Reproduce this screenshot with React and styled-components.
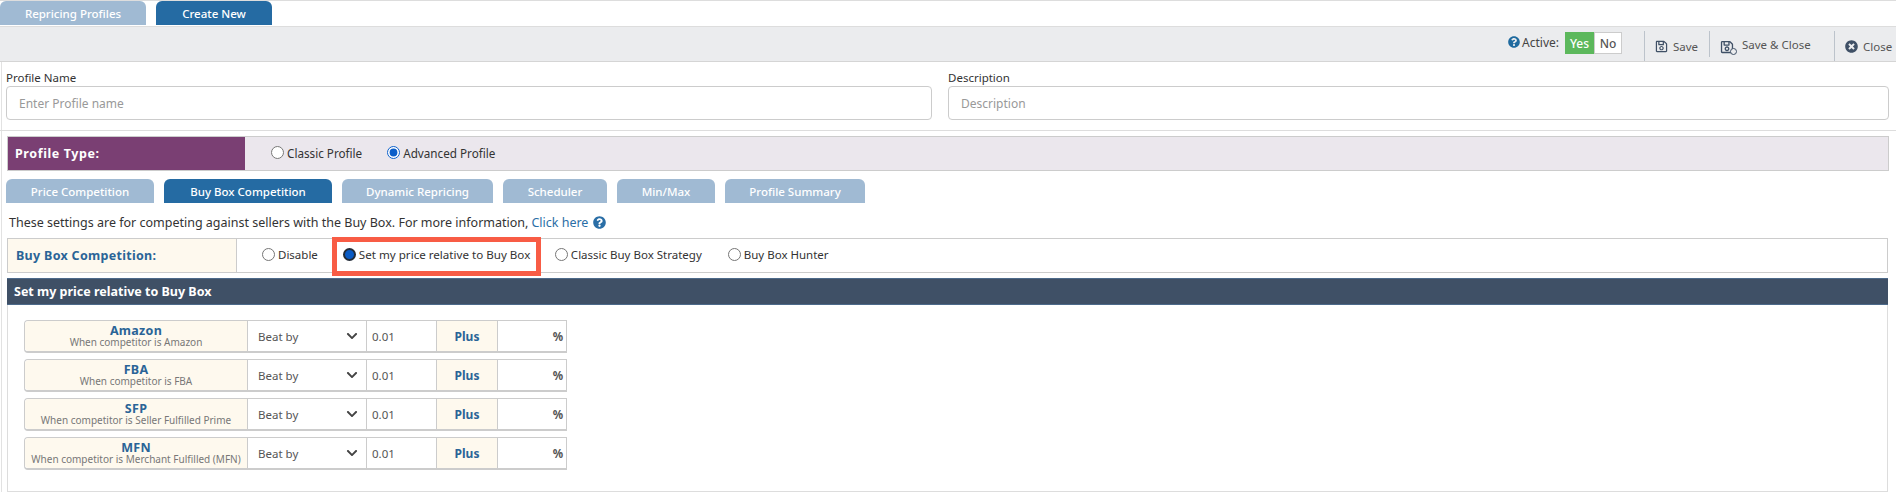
import React from "react";
import styled, { createGlobalStyle } from "styled-components";
import { FaChevronDown, FaQuestionCircle, FaRegSave, FaTimesCircle } from "react-icons/fa";

const GlobalStyle = createGlobalStyle`
  html, body {
    margin: 0;
    padding: 0;
    background: #fff;
  }
  body {
    font-family: "Noto Sans", "Open Sans", sans-serif;
    font-size: 12px;
    color: #333;
  }
  * {
    box-sizing: border-box;
  }
`;

const Page = styled.div`
  width: 1896px;
  height: 496px;
  overflow: hidden;
  border-top: 1px solid #ddd;
`;

const TopTabs = styled.div`
  display: flex;
  gap: 10px;
  height: 25px;
  border-bottom: 1px solid #ddd;
  box-sizing: content-box;
`;

const Tab = styled.div`
  display: flex;
  align-items: center;
  justify-content: center;
  width: ${(p) => p.$w}px;
  height: ${(p) => p.$h || 24}px;
  border-radius: 6px 6px 0 0;
  background: ${(p) => (p.$active ? "#256ba3" : "#a0bad3")};
  color: #fff;
  font-size: 11.5px;
  font-weight: 500;
`;

const Body = styled.div`
  border-left: 1px solid #e2e2e2;
  margin-left: 1px;
`;

const Toolbar = styled.div`
  display: flex;
  align-items: flex-start;
  justify-content: flex-end;
  height: 35px;
  margin-left: -2px;
  background: #ebecee;
  border-bottom: 1px solid #d5d5d5;
`;

const ActiveGroup = styled.div`
  display: flex;
  align-items: center;
  height: 22px;
  margin-top: 5px;
  margin-right: 22px;
  font-size: 12px;
  color: #444;
  svg {
    width: 12px;
    height: 12px;
    color: #1f6a9f;
    margin-right: 2px;
    margin-top: -3px;
  }
`;

const ActiveLabel = styled.span`
  margin-right: 6px;
  margin-top: -1px;
`;

const Toggle = styled.div`
  display: flex;
  align-items: center;
  justify-content: center;
  height: 22px;
  width: ${(p) => p.$w}px;
  font-weight: 500;
  color: ${(p) => (p.$on ? "#fff" : "#555")};
  background: ${(p) => (p.$on ? "#5cb85c" : "#fff")};
  border: 1px solid ${(p) => (p.$on ? "#5cb85c" : "#ccc")};
`;

const ToolButton = styled.div`
  display: flex;
  align-items: flex-start;
  width: ${(p) => p.$w}px;
  height: ${(p) => p.$h}px;
  margin-top: 4px;
  padding-left: 10px;
  padding-top: ${(p) => p.$top}px;
  border-left: 1px solid #bcc3cb;
  font-size: 11.5px;
  color: #555;
  svg {
    width: 13px;
    height: 13px;
    color: #3f5066;
    margin-right: 5px;
    flex: none;
  }
`;

const ButtonText = styled.span`
  margin-top: ${(p) => p.$top || 0}px;
  line-height: 14px;
`;

const SaveCloseIcon = styled.span`
  position: relative;
  display: block;
  width: 17px;
  height: 15px;
  margin-right: 5px;
  flex: none;
  svg {
    width: 14px;
    height: 14px;
  }
  &::after {
    content: "";
    position: absolute;
    right: 0;
    bottom: 0;
    width: 5px;
    height: 5px;
    border-radius: 50%;
    background: #ebecee;
    border: 1.5px solid #3f5066;
  }
`;

const FormRow = styled.div`
  display: flex;
  gap: 16px;
  padding: 9px 6px 10px 6px;
  height: 69px;
  border-bottom: 1px solid #ddd;
  margin-left: -2px;
`;

const Field = styled.div`
  width: ${(p) => p.$w}px;
  flex: none;
`;

const FieldLabel = styled.label`
  display: block;
  height: 14px;
  margin-bottom: 1px;
  line-height: 14px;
  font-size: 11.5px;
  color: #333;
`;

const TextInput = styled.input`
  display: block;
  width: 100%;
  height: 34px;
  padding: 0 12px;
  border: 1px solid #ccc;
  border-radius: 4px;
  background: #fff;
  font: inherit;
  font-size: 12px;
  &::placeholder {
    color: #999;
    opacity: 1;
  }
`;

const Main = styled.div`
  padding: 5px 8px 0 5px;
`;

const ProfileType = styled.div`
  display: flex;
  align-items: stretch;
  height: 35px;
  margin-right: -1px;
  border: 1px solid #ccc;
  background: #ebe7ed;
`;

const ProfileLabel = styled.div`
  display: flex;
  align-items: center;
  width: 237px;
  padding-left: 7px;
  background: #7a3f73;
  color: #fff;
  font-size: 12.5px;
  font-weight: 700;
  letter-spacing: 0.6px;
`;

const RadioGroup = styled.div`
  display: flex;
  align-items: center;
  padding-left: ${(p) => p.$left}px;
  padding-bottom: ${(p) => p.$bottom || 0}px;
`;

const RadioItem = styled.label`
  display: flex;
  align-items: center;
  margin-right: ${(p) => p.$gap}px;
  font-size: ${(p) => p.$size || 11.5}px;
  white-space: nowrap;
  color: #333;
`;

const Radio = styled.input.attrs({ type: "radio" })`
  width: 13px;
  height: 13px;
  margin: 0 3px 0 0;
  accent-color: #0b5ec9;
`;

// the picked radio has keyboard focus in the picture, so it gets a dark ring
const FocusRadio = styled.span`
  display: block;
  width: 13px;
  height: 13px;
  margin-right: 3px;
  border-radius: 50%;
  background: #0a5bc4;
  border: 2px solid #232c38;
  flex: none;
`;

const SubTabs = styled.div`
  display: flex;
  gap: 10px;
  margin: 8px 0 0 -1px;
  height: 24px;
`;

const Note = styled.div`
  display: flex;
  align-items: center;
  height: 35px;
  padding: 4px 0 0 2px;
  font-size: 12.5px;
  color: #333;
  svg {
    width: 13px;
    height: 13px;
    color: #2a6ea6;
    margin-left: 5px;
  }
`;

const NoteLink = styled.a`
  color: #2a6ea6;
  margin-left: 3px;
`;

const CompetitionRow = styled.div`
  display: flex;
  height: 35px;
  border: 1px solid #ccc;
  background: #fff;
`;

const CompetitionLabel = styled.div`
  display: flex;
  align-items: center;
  width: 229px;
  padding-left: 8px;
  background: #fef9ee;
  border-right: 1px solid #ccc;
  color: #2a6497;
  font-size: 12.5px;
  font-weight: 700;
  letter-spacing: 0.3px;
`;

const Highlight = styled.div`
  display: flex;
  align-items: center;
  width: 209px;
  height: 39px;
  flex: none;
  margin: 3px 14px 0 0;
  padding: 0 0 3px 6px;
  border: 5px solid #f85c45;
`;

const Panel = styled.div`
  height: 214px;
  margin-top: 5px;
  border: 1px solid #ddd;
  border-top: 0;
`;

const PanelHeader = styled.div`
  display: flex;
  align-items: center;
  height: 27px;
  margin: 0 -1px;
  padding-left: 7px;
  background: #3f5066;
  border-top: 1px solid #4d6a8a;
  border-bottom: 1px solid #4d6a8a;
  color: #fff;
  font-size: 12.5px;
  font-weight: 700;
`;

const Rules = styled.div`
  display: flex;
  flex-direction: column;
  gap: 6px;
  padding: 15px 0 0 16px;
`;

const Rule = styled.div`
  display: grid;
  grid-template-columns: 223px 119px 70px 61px 70px;
  width: 543px;
  height: 33px;
  border: 1px solid #ccc;
  border-radius: 4px 0 0 4px;
  border-width: 1px 1px 2px 1px;
`;

const RuleLabel = styled.div`
  display: flex;
  flex-direction: column;
  align-items: center;
  justify-content: center;
  background: #fef9ee;
  border-right: 1px solid #ccc;
  border-radius: 4px 0 0 4px;
`;

const RuleTitle = styled.div`
  color: #2a6497;
  font-size: 12.5px;
  line-height: 12px;
  font-weight: 700;
  letter-spacing: 0.3px;
`;

const RuleSub = styled.div`
  color: #777;
  font-size: 10px;
  line-height: 11px;
`;

const SelectCell = styled.div`
  display: flex;
  align-items: center;
  justify-content: space-between;
  padding: 0 8px 0 10px;
  border-right: 1px solid #ccc;
  font-size: 11.5px;
  color: #555;
  svg {
    width: 12px;
    height: 12px;
    color: #444;
  }
`;

const ValueCell = styled.div`
  display: flex;
  align-items: center;
  padding-left: 5px;
  border-right: 1px solid #ccc;
  font-size: 11.5px;
  color: #555;
`;

const PlusCell = styled.div`
  display: flex;
  align-items: center;
  justify-content: center;
  background: #fef9ee;
  border-right: 1px solid #ccc;
  color: #2a6497;
  font-size: 12px;
  font-weight: 700;
`;

const PercentCell = styled.div`
  display: flex;
  align-items: center;
  justify-content: flex-end;
  padding-right: 5px;
  font-size: 11.5px;
  font-weight: 700;
  color: #555;
`;

const subTabs = [
  { label: "Price Competition", w: 148 },
  { label: "Buy Box Competition", w: 168, active: true },
  { label: "Dynamic Repricing", w: 151 },
  { label: "Scheduler", w: 104 },
  { label: "Min/Max", w: 98 },
  { label: "Profile Summary", w: 140 },
];

const rules = [
  { title: "Amazon", sub: "When competitor is Amazon" },
  { title: "FBA", sub: "When competitor is FBA" },
  { title: "SFP", sub: "When competitor is Seller Fulfilled Prime" },
  { title: "MFN", sub: "When competitor is Merchant Fulfilled (MFN)" },
];

export default function App() {
  return (
    <Page>
      <GlobalStyle />
      <TopTabs>
        <Tab $w={146}>Repricing Profiles</Tab>
        <Tab $w={116} $active>Create New</Tab>
      </TopTabs>
      <Body>
        <Toolbar>
          <ActiveGroup>
            <FaQuestionCircle />
            <ActiveLabel>Active:</ActiveLabel>
            <Toggle $on $w={29}>Yes</Toggle>
            <Toggle $w={28}>No</Toggle>
          </ActiveGroup>
          <ToolButton $w={65} $h={30} $top={9}>
            <FaRegSave />
            <ButtonText>Save</ButtonText>
          </ToolButton>
          <ToolButton $w={125} $h={26} $top={9}>
            <SaveCloseIcon>
              <FaRegSave />
            </SaveCloseIcon>
            <ButtonText $top={-2}>Save &amp; Close</ButtonText>
          </ToolButton>
          <ToolButton $w={62} $h={30} $top={9}>
            <FaTimesCircle />
            <ButtonText>Close</ButtonText>
          </ToolButton>
        </Toolbar>
        <FormRow>
          <Field $w={926}>
            <FieldLabel>Profile Name</FieldLabel>
            <TextInput placeholder="Enter Profile name" />
          </Field>
          <Field $w={941}>
            <FieldLabel>Description</FieldLabel>
            <TextInput placeholder="Description" />
          </Field>
        </FormRow>
        <Main>
          <ProfileType>
            <ProfileLabel>Profile Type:</ProfileLabel>
            <RadioGroup $left={26} $bottom={2}>
              <RadioItem $gap={25} $size={11.7}>
                <Radio name="ptype" />
                Classic Profile
              </RadioItem>
              <RadioItem $gap={0} $size={11.7}>
                <Radio name="ptype" defaultChecked />
                Advanced Profile
              </RadioItem>
            </RadioGroup>
          </ProfileType>
          <SubTabs>
            {subTabs.map((t) => (
              <Tab key={t.label} $w={t.w} $active={t.active}>
                {t.label}
              </Tab>
            ))}
          </SubTabs>
          <Note>
            These settings are for competing against sellers with the Buy Box. For more information,
            <NoteLink>Click here</NoteLink>
            <FaQuestionCircle />
          </Note>
          <CompetitionRow>
            <CompetitionLabel>Buy Box Competition:</CompetitionLabel>
            <RadioGroup $left={25} $bottom={2}>
              <RadioItem $gap={14}>
                <Radio name="bb" />
                Disable
              </RadioItem>
              <Highlight>
                <RadioItem $gap={0} $size={11.6}>
                  <FocusRadio />
                  Set my price relative to Buy Box
                </RadioItem>
              </Highlight>
              <RadioItem $gap={26}>
                <Radio name="bb" />
                Classic Buy Box Strategy
              </RadioItem>
              <RadioItem $gap={0}>
                <Radio name="bb" />
                Buy Box Hunter
              </RadioItem>
            </RadioGroup>
          </CompetitionRow>
          <Panel>
            <PanelHeader>Set my price relative to Buy Box</PanelHeader>
            <Rules>
              {rules.map((r) => (
                <Rule key={r.title}>
                  <RuleLabel>
                    <RuleTitle>{r.title}</RuleTitle>
                    <RuleSub>{r.sub}</RuleSub>
                  </RuleLabel>
                  <SelectCell>
                    Beat by
                    <FaChevronDown />
                  </SelectCell>
                  <ValueCell>0.01</ValueCell>
                  <PlusCell>Plus</PlusCell>
                  <PercentCell>%</PercentCell>
                </Rule>
              ))}
            </Rules>
          </Panel>
        </Main>
      </Body>
    </Page>
  );
}
